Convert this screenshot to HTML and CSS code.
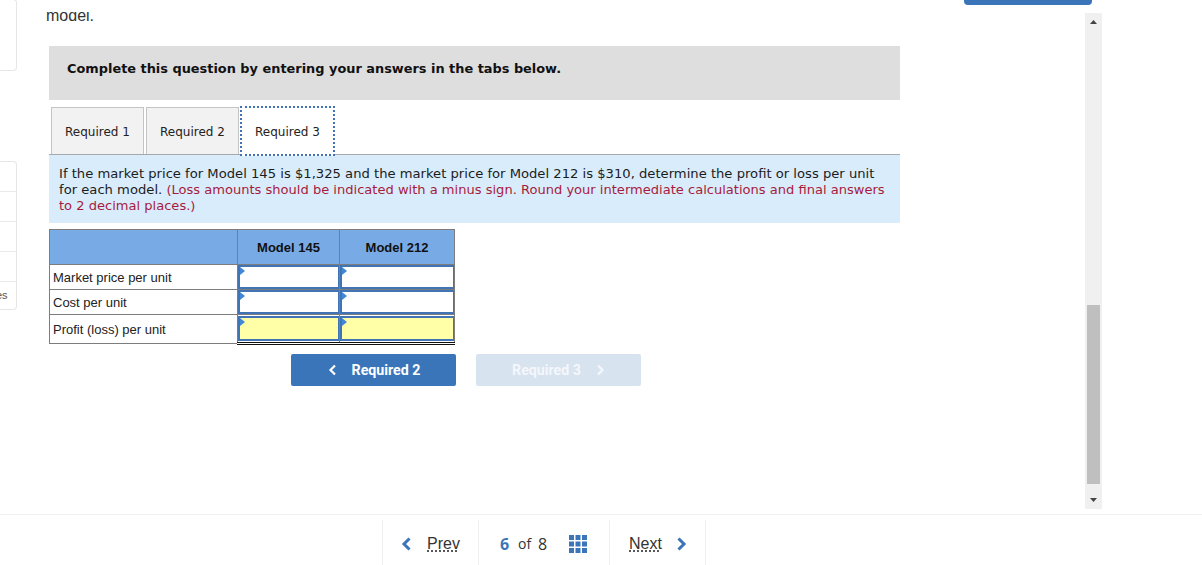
FILE: index.html
```html
<!DOCTYPE html>
<html lang="en">
<head>
<meta charset="utf-8">
<title>Required 3</title>
<link rel="stylesheet" href="styles.css">
</head>
<body>
<div class="page">
  <div class="upper">
    <aside class="side">
      <div class="card card-top"></div>
      <div class="card card-list">
        <div class="card-row"></div>
        <div class="card-row"></div>
        <div class="card-row"></div>
        <div class="card-row"></div>
        <div class="card-row card-last">es</div>
      </div>
    </aside>
    <main class="main">
      <p class="clipped">model.</p>
      <div class="banner">Complete this question by entering your answers in the tabs below.</div>
      <div class="tabs">
        <div class="tab">Required 1</div>
        <div class="tab">Required 2</div>
        <div class="tab tab-active">Required 3</div>
      </div>
      <div class="prompt">If the market price for Model 145 is $1,325 and the market price for Model 212 is $310, determine the profit or loss per unit for each model. <span class="hint">(Loss amounts should be indicated with a minus sign. Round your intermediate calculations and final answers to 2 decimal places.)</span></div>
      <table class="grid">
        <thead>
          <tr><th class="col-label"></th><th class="col-a">Model 145</th><th class="col-b">Model 212</th></tr>
        </thead>
        <tbody>
          <tr class="row-a"><td class="label">Market price per unit</td><td class="cell"><div class="entry"></div></td><td class="cell"><div class="entry"></div></td></tr>
          <tr class="row-a"><td class="label">Cost per unit</td><td class="cell"><div class="entry"></div></td><td class="cell"><div class="entry"></div></td></tr>
          <tr class="row-total"><td class="label">Profit (loss) per unit</td><td class="cell"><div class="entry entry-total"></div></td><td class="cell"><div class="entry entry-total"></div></td></tr>
        </tbody>
      </table>
      <div class="nav-buttons">
        <div class="btn btn-on">
          <svg class="btn-chev" width="9" height="12" viewBox="0 0 9 12"><path d="M7 1.500 2.500 6 7 10.500" fill="none" stroke="currentColor" stroke-width="2.200"/></svg>
          <span>Required 2</span>
        </div>
        <div class="btn btn-off">
          <span>Required 3</span>
          <svg class="btn-chev" width="9" height="12" viewBox="0 0 9 12"><path d="M2 1.500 6.500 6 2 10.500" fill="none" stroke="currentColor" stroke-width="2.200"/></svg>
        </div>
      </div>
    </main>
    <div class="top-action"></div>
    <div class="scrollbar">
      <svg class="arrow" width="7" height="4" viewBox="0 0 7 4"><path d="M3.500 0 7 4H0z" fill="#444"/></svg>
      <div class="track"><div class="thumb"></div></div>
      <svg class="arrow" width="7" height="4" viewBox="0 0 7 4"><path d="M0 0h7L3.500 4z" fill="#444"/></svg>
    </div>
  </div>
  <footer class="pager">
    <div class="pager-cell pager-prev">
      <svg width="11" height="14" viewBox="0 0 11 14"><path d="M8.500 1.500 3 7l5.500 5.500" fill="none" stroke="#3a75ba" stroke-width="3"/></svg>
      <span class="pager-link">Prev</span>
    </div>
    <div class="pager-cell pager-count">
      <b class="count-now">6</b><span class="count-of">of</span><span class="count-all">8</span>
      <svg class="count-grid" width="18" height="18" viewBox="0 0 18 18" fill="#3a75ba"><path d="M0 0h5v5H0zM6.500 0h5v5h-5zM13 0h5v5h-5zM0 6.500h5v5H0zM6.500 6.500h5v5h-5zM13 6.500h5v5h-5zM0 13h5v5H0zM6.500 13h5v5h-5zM13 13h5v5h-5z"/></svg>
    </div>
    <div class="pager-cell pager-next">
      <span class="pager-link">Next</span>
      <svg width="11" height="14" viewBox="0 0 11 14"><path d="M2.500 1.500 8 7l-5.500 5.500" fill="none" stroke="#3a75ba" stroke-width="3"/></svg>
    </div>
  </footer>
</div>
</body>
</html>
```
FILE: styles.css
```css
* { box-sizing: border-box; }
html, body { margin: 0; padding: 0; background: #fff; overflow: hidden; }
.page { width: 1202px; height: 565px; display: flex; flex-direction: column; overflow: hidden; }

.upper {
  height: 515px;
  flex: none;
  display: grid;
  grid-template-columns: 18px 1067px 17px 100px;
  grid-template-rows: 13px 496px 6px;
  border-bottom: 1px solid #f1f1f1;
}

.side { grid-column: 1; grid-row: 1 / 4; overflow: hidden; }
.card { width: 18px; margin-left: -1px; border: 1px solid #e6e6e6; border-left: 0; border-radius: 0 4px 4px 0; }
.card-top { height: 72px; margin-top: -1px; }
.card-list { height: 149px; margin-top: 90px; }
.card-row { height: 30px; border-top: 1px solid #e9e9e9; }
.card-row:first-child { height: 29px; border-top: 0; }
.card-last { font: 11px/27px "Liberation Sans", sans-serif; color: #555; height: 29px; text-indent: -3px; overflow: hidden; }

.main { grid-column: 2; grid-row: 1 / 4; padding-left: 31px; overflow: hidden; min-width: 0; }
.clipped {
  margin: 12px 0 0 -3px;
  height: 9px;
  overflow: hidden;
  font: 16px/7px "Liberation Sans", sans-serif;
  color: #333;
}
.banner {
  margin-top: 25px;
  width: 851px;
  height: 54px;
  padding-left: 18px;
  background: #dedede;
  font: bold 12.900px/46px "DejaVu Sans", sans-serif;
  color: #111;
}
.tabs { display: flex; gap: 2px; height: 47px; margin: 7px 0 0 2px; align-items: flex-start; }
.tab {
  width: 93px;
  height: 47px;
  padding-top: 17px;
  background: #f2f2f2;
  border: 1px solid #c4c4c4;
  border-bottom: 0;
  text-align: center;
  font: 12px/15px "DejaVu Sans", sans-serif;
  color: #222;
}
.tab-active {
  width: 95px;
  height: 50px;
  margin: -1px 0 0 -1px;
  background: #fff;
  border: 2px dotted #3f73b5;
  padding-top: 17px;
  position: relative;
  z-index: 1;
}
.prompt {
  width: 851px;
  height: 69px;
  padding: 11px 10px 0;
  background: #d9ecfb;
  border-top: 1px solid #a9a9a9;
  font: 13.150px/16px "DejaVu Sans", sans-serif;
  color: #1c1c1c;
}
.hint { color: #a61c3c; font-size: 13.060px; }

.grid {
  margin-top: 6px;
  width: 405px;
  table-layout: fixed;
  border-collapse: collapse;
  font: 13px/14px "Liberation Sans", sans-serif;
  color: #222;
}
.col-label { width: 188px; }
.col-a { width: 102px; }
.col-b { width: 115px; }
.grid th {
  height: 35px;
  background: #78abe6;
  border: 1px solid #7d7d7d;
  font: bold 13px/16px "Liberation Sans", sans-serif;
  color: #111;
  padding: 2px 0 0;
}
.label { border: 1px solid #7d7d7d; padding: 2px 0 0 3px; }
.row-a .label { height: 25px; }
.row-total .label { height: 29px; padding-top: 2px; }
.cell { padding: 0; border: 1px solid #7d7d7d; border-width: 0 1px 1px; height: 25px; }
.entry {
  position: relative;
  height: 24px;
  background: #fff;
  border: 2px solid #4174b4;
  border-right-width: 1px;
}
.entry::before {
  content: "";
  position: absolute;
  top: 0;
  left: 0;
  border-left: 5px solid #4187d6;
  border-top: 4px solid transparent;
  border-bottom: 4px solid transparent;
}
.row-total .cell { border-top: 1px solid #111; border-bottom: 3px double #111; }
.entry-total { height: 25px; background: #ffffa8; }

.nav-buttons { display: flex; gap: 20px; margin: 9px 0 0 242px; }
.btn {
  width: 165px;
  height: 32px;
  display: flex;
  align-items: center;
  justify-content: center;
  gap: 15px;
  border-radius: 2px;
  font: bold 14.200px/16px Roboto, "Liberation Sans", sans-serif;
}
.btn-on { background: #3a75ba; color: #fff; padding-left: 1px; }
.btn-off { background: #d8e3f0; color: #f4f7fb; }

.top-action {
  grid-column: 2 / 4;
  grid-row: 1;
  justify-self: end;
  align-self: start;
  width: 128px;
  height: 5px;
  margin-right: 10px;
  background: #3a75ba;
  border-radius: 0 0 4px 4px;
  position: relative;
  z-index: 2;
}

.scrollbar {
  grid-column: 3;
  grid-row: 2;
  background: #f0f0f0;
  display: flex;
  flex-direction: column;
  align-items: center;
  padding: 7px 0;
}
.arrow { flex: none; display: block; }
.track { flex: 1; width: 13px; display: flex; flex-direction: column; justify-content: flex-end; padding-bottom: 14px; }
.thumb { height: 179px; background: #bfbfbf; }

.pager {
  flex: 1;
  display: flex;
  padding-left: 382px;
  padding-top: 5px;
  font: 15px/18px "Open Sans", "Liberation Sans", sans-serif;
  color: #333;
}
.pager-cell {
  display: flex;
  align-items: center;
  border-left: 1px solid #efefef;
  padding-top: 3px;
}
.pager-prev { width: 96px; padding-left: 18px; gap: 15px; }
.pager-count { width: 131px; padding-left: 21px; }
.pager-next { width: 97px; padding-left: 19px; gap: 14px; border-right: 1px solid #efefef; }
.pager-link { font-family: "Liberation Sans", sans-serif; font-size: 16px; text-decoration: underline dotted #222; text-underline-offset: 2px; }
.count-now { color: #3a75ba; font-size: 16px; width: 18px; }
.count-of { font-size: 14px; width: 20px; }
.count-all { width: 31px; font-size: 16px; }
.count-grid { flex: none; }
```
